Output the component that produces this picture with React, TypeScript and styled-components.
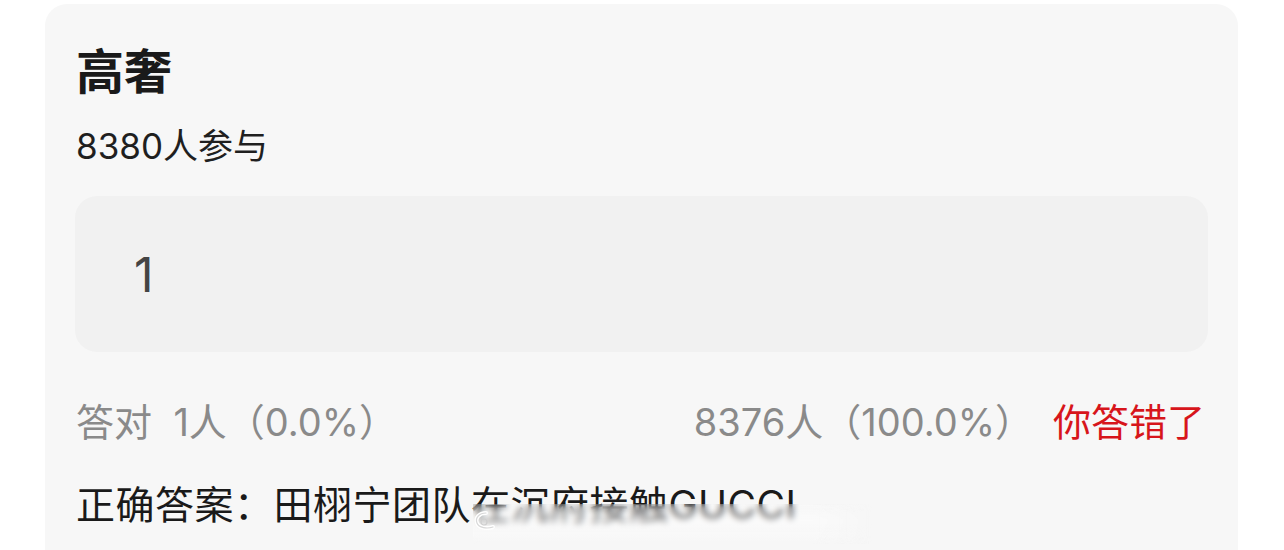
import React from 'react';
import styled, { createGlobalStyle } from 'styled-components';

const Global = createGlobalStyle`
  html, body {
    margin: 0;
    padding: 0;
    background: #fff;
    overflow: hidden;
  }
  body {
    font-family: Inter, "Noto Sans CJK SC", sans-serif;
    color: #1a1a1a;
  }
`;

const Page = styled.div`
  height: 550px;
  padding: 4px 46px 0 45px;
  box-sizing: border-box;
`;

const Card = styled.section`
  position: relative;
  background: #f7f7f7;
  border-radius: 22px;
  padding: 40px 30px;
  height: 620px;
  box-sizing: border-box;
  display: flex;
  flex-direction: column;
`;

const Title = styled.h1`
  margin: 0 0 0 1px;
  font-size: 48px;
  line-height: 56px;
  font-weight: 700;
  color: #1a1a1a;
`;

const Joined = styled.div`
  margin: 26px 0 0 1px;
  font-size: 35px;
  line-height: 40px;
  color: #1f1f1f;
`;

const AnswerBox = styled.div`
  margin-top: 30px;
  height: 156px;
  flex: none;
  border-radius: 22px;
  background: #f1f1f1;
  display: flex;
  align-items: center;
  padding-left: 59px;
  font-size: 48px;
  color: #444;
`;

const StatRow = styled.div`
  margin-top: 48px;
  display: flex;
  align-items: center;
  font-size: 38px;
  line-height: 44px;
  color: #8a8a8a;
  padding: 0 3px 0 1px;
`;

const Stat = styled.span<{ $grow?: boolean }>`
  flex: ${(p) => (p.$grow ? 1 : 'none')};
  white-space: pre;
`;

const Wrong = styled.span`
  margin-left: 20px;
  color: #d7151b;
`;

const Correct = styled.div`
  margin: 39px 0 0 1px;
  font-size: 39px;
  line-height: 44px;
  letter-spacing: 0.5px;
  color: #1a1a1a;
  white-space: nowrap;
`;

// weibo watermark smeared over the lower half of the answer line
const Watermark = styled.div`
  position: absolute;
  left: 428px;
  top: 500px;
  width: 400px;
  height: 40px;
  display: flex;
  align-items: flex-start;
  backdrop-filter: blur(3px);
  background: linear-gradient(
    180deg,
    rgba(247, 247, 247, 0.1) 0%,
    rgba(255, 255, 255, 0.45) 40%,
    rgba(247, 247, 247, 0.35) 100%
  );
  mask-image: linear-gradient(90deg, #000 0%, #000 85%, transparent 100%);
`;

const WeiboMark = styled.svg`
  margin-top: 6px;
  flex: none;
`;

export default function App() {
  return (
    <Page>
      <Global />
      <Card>
        <Title>高奢</Title>
        <Joined>8380人参与</Joined>
        <AnswerBox>1</AnswerBox>
        <StatRow>
          <Stat $grow>答对  1人（0.0%）</Stat>
          <Stat>8376人（100.0%）</Stat>
          <Wrong>你答错了</Wrong>
        </StatRow>
        <Correct>正确答案：田栩宁团队在沉府接触GUCCI</Correct>
        <Watermark>
          <WeiboMark width="26" height="22" viewBox="0 0 26 22">
            <path d="M13 3 C6 3 2 8 4 13 C6 18 14 19 20 17" fill="none" stroke="#fff" strokeWidth="4" strokeLinecap="round" />
            <path d="M13 3 C6 3 2 8 4 13 C6 18 14 19 20 17" fill="none" stroke="#d8d8d8" strokeWidth="1.2" strokeLinecap="round" />
            <circle cx="11" cy="12" r="3" fill="none" stroke="#cfcfcf" strokeWidth="1.2" />
          </WeiboMark>
        </Watermark>
      </Card>
    </Page>
  );
}
